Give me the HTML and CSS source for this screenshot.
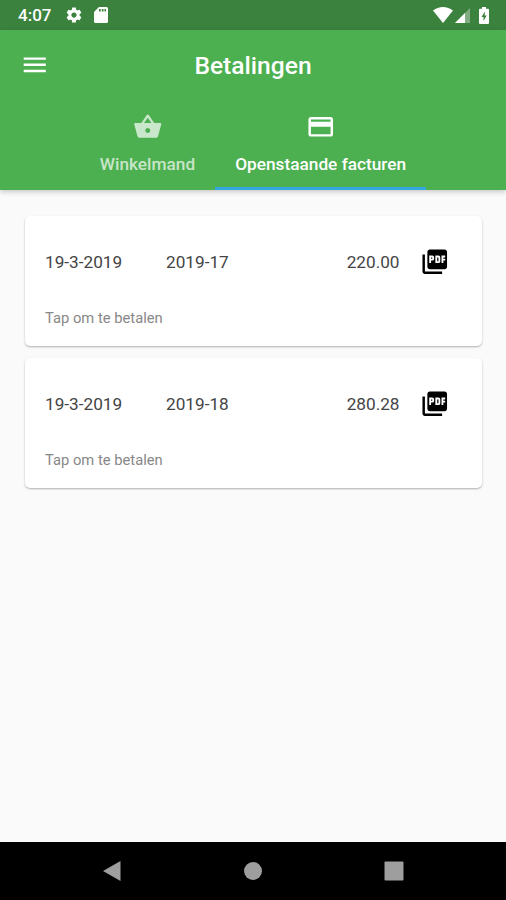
FILE: index.html
```html
<!DOCTYPE html>
<html lang="nl">
<head>
    <meta charset="UTF-8">
    <meta name="viewport" content="width=device-width, initial-scale=1.0">
    <title>Betalingen</title>
    <link rel="stylesheet" href="styles.css">
</head>
<body>
    <div class="status-bar">
        <span class="clock">4:07</span>
        <svg class="status-gear" viewBox="0 0 24 24"><path d="M19.43 12.98c.04-.32.07-.64.07-.98s-.03-.66-.07-.98l2.11-1.65c.19-.15.24-.42.12-.64l-2-3.46c-.12-.22-.39-.3-.61-.22l-2.49 1c-.52-.4-1.08-.73-1.69-.98l-.38-2.65C14.46 2.18 14.25 2 14 2h-4c-.25 0-.46.18-.49.42l-.38 2.65c-.61.25-1.17.59-1.69.98l-2.49-1c-.23-.09-.49 0-.61.22l-2 3.46c-.13.22-.07.49.12.64l2.11 1.65c-.04.32-.07.65-.07.98s.03.66.07.98l-2.11 1.65c-.19.15-.24.42-.12.64l2 3.46c.12.22.39.3.61.22l2.49-1c.52.4 1.08.73 1.69.98l.38 2.65c.03.24.24.42.49.42h4c.25 0 .46-.18.49-.42l.38-2.65c.61-.25 1.17-.59 1.69-.98l2.49 1c.23.09.49 0 .61-.22l2-3.46c.12-.22.07-.49-.12-.64l-2.11-1.65zM12 15.5c-1.93 0-3.5-1.57-3.5-3.5s1.57-3.5 3.5-3.5 3.5 1.57 3.5 3.5-1.57 3.5-3.5 3.5z"/></svg>
        <svg class="status-card" viewBox="0 0 14 16"><path d="M5 0h7.500Q14 0 14 1.500v13Q14 16 12.500 16h-11Q0 16 0 14.500V5z"/><path class="card-pins" d="M5 2h1.700v2.500H5zM7.800 2h1.700v2.500H7.800zM10.500 2h1.500v2.500h-1.500z"/></svg>
        <div class="status-right">
            <svg class="status-wifi" viewBox="0 0 20 16"><path d="M0 3.500Q4.500 0 10 0t10 3.500L10 16z"/></svg>
            <svg class="status-signal" viewBox="0 0 15 15"><path class="dim" d="M15 0v15H0z"/><path d="M10 5v10H0z"/></svg>
            <svg class="status-battery" viewBox="0 0 10 17"><path d="M3 0h4v1.700h2Q10 1.700 10 2.700V16q0 1-1 1H1q-1 0-1-1V2.700q0-1 1-1h2z"/><path class="bolt" d="M5.800 4.500 2.500 10h2v4l3.200-5.500h-2z"/></svg>
        </div>
    </div>

    <header>
        <div class="app-bar">
            <svg class="icon" viewBox="0 0 24 24"><path d="M3 18h18v-2H3v2zm0-5h18v-2H3v2zm0-7v2h18V6H3z"/></svg>
            <h1>Betalingen</h1>
        </div>
        <nav class="tabs">
            <div class="tab">
                <svg class="icon" viewBox="0 0 24 24"><path d="M17.210 9l-4.380-6.560c-.19-.28-.51-.42-.83-.42-.32 0-.64.14-.83.43L6.790 9H2c-.55 0-1 .45-1 1 0 .09.010.18.040.27l2.540 9.270c.23.84 1 1.460 1.920 1.460h13c.92 0 1.690-.62 1.930-1.460l2.540-9.270L23 10c0-.55-.45-1-1-1h-4.790zM9 9l3-4.400L15 9H9zm3 8c-1.100 0-2-.9-2-2s.9-2 2-2 2 .9 2 2-.9 2-2 2z"/></svg>
                <span>Winkelmand</span>
            </div>
            <div class="tab active">
                <svg class="icon" viewBox="0 0 24 24"><path d="M20 4H4c-1.110 0-1.990.89-1.990 2L2 18c0 1.110.89 2 2 2h16c1.110 0 2-.89 2-2V6c0-1.110-.89-2-2-2zm0 14H4v-6h16v6zm0-10H4V6h16v2z"/></svg>
                <span>Openstaande facturen</span>
            </div>
        </nav>
    </header>

    <main>
        <div class="card">
            <div class="invoice">
                <span class="date">19-3-2019</span>
                <span class="number">2019-17</span>
                <span class="amount">220.00</span>
                <svg class="icon" viewBox="0 0 24 24"><path d="M20 2H8c-1.100 0-2 .9-2 2v12c0 1.100.9 2 2 2h12c1.100 0 2-.9 2-2V4c0-1.100-.9-2-2-2zm-8.500 7.500c0 .83-.67 1.500-1.500 1.500H9v2H7.500V7H10c.83 0 1.500.67 1.500 1.500v1zm5 2c0 .83-.67 1.500-1.500 1.500h-2.500V7H15c.83 0 1.500.67 1.500 1.500v3zm4-3H19v1h1.500V11H19v2h-1.500V7h3v1.500zM9 9.500h1v-1H9v1zM4 6H2v14c0 1.100.9 2 2 2h14v-2H4V6zm10 5.500h1v-3h-1v3z"/></svg>
            </div>
            <p>Tap om te betalen</p>
        </div>
        <div class="card">
            <div class="invoice">
                <span class="date">19-3-2019</span>
                <span class="number">2019-18</span>
                <span class="amount">280.28</span>
                <svg class="icon" viewBox="0 0 24 24"><path d="M20 2H8c-1.100 0-2 .9-2 2v12c0 1.100.9 2 2 2h12c1.100 0 2-.9 2-2V4c0-1.100-.9-2-2-2zm-8.500 7.500c0 .83-.67 1.500-1.500 1.500H9v2H7.500V7H10c.83 0 1.500.67 1.500 1.500v1zm5 2c0 .83-.67 1.500-1.500 1.500h-2.500V7H15c.83 0 1.500.67 1.500 1.500v3zm4-3H19v1h1.500V11H19v2h-1.500V7h3v1.500zM9 9.500h1v-1H9v1zM4 6H2v14c0 1.100.9 2 2 2h14v-2H4V6zm10 5.500h1v-3h-1v3z"/></svg>
            </div>
            <p>Tap om te betalen</p>
        </div>
    </main>

    <footer>
        <svg viewBox="0 0 20 22"><path d="M18.500 1v20L1 11z"/></svg>
        <svg viewBox="0 0 20 22"><circle cx="10" cy="11" r="9"/></svg>
        <svg viewBox="0 0 20 22"><rect x=".5" y="1.500" width="19" height="19" rx="1"/></svg>
    </footer>
</body>
</html>
```

FILE: styles.css
```css
:root {
    --primary: #4caf50;
    --primary-dark: #3b823e;
    --accent: #35a7df;
    --background: #fafafa;
}

* {
    box-sizing: border-box;
    margin: 0;
    padding: 0;
}

body {
    display: flex;
    flex-direction: column;
    height: 100vh;
    overflow: hidden;
    background-color: var(--background);
    font-family: Roboto, "Liberation Sans", sans-serif;
}

svg {
    display: block;
    flex: none;
    fill: currentColor;
}

.icon {
    width: 29.5px;
    height: 29.5px;
}

/* Status bar */
.status-bar {
    display: flex;
    align-items: center;
    height: 30px;
    padding: 0 17px 0 18px;
    background-color: var(--primary-dark);
    color: white;
}

.clock {
    width: 47px;
    font-size: 17px;
    font-weight: 500;
}

.status-gear {
    width: 18px;
    height: 18px;
}

.status-card {
    width: 14px;
    height: 16px;
    margin-left: 11px;
}

.card-pins,
.bolt {
    fill: var(--primary-dark);
}

.status-right {
    display: flex;
    align-items: center;
    margin-left: auto;
}

.status-wifi {
    width: 20px;
    height: 16px;
}

.status-signal {
    width: 15px;
    height: 15px;
    margin-left: 2px;
}

.status-battery {
    width: 10px;
    height: 17px;
    margin-left: 9px;
}

.dim {
    opacity: 0.35;
}

/* App bar and tabs */
header {
    height: 160px;
    background-color: var(--primary);
    color: white;
    box-shadow: 0 2px 5px rgba(0, 0, 0, 0.2);
}

.app-bar {
    display: grid;
    grid-template-columns: 30px 1fr 30px;
    align-items: center;
    height: 70px;
    padding: 0 20px;
}

.app-bar h1 {
    font-size: 24.6px;
    font-weight: 500;
    text-align: center;
}

.tabs {
    display: flex;
    justify-content: center;
    height: 90px;
}

.tab {
    display: flex;
    flex-direction: column;
    align-items: center;
    padding: 12px 20px 0;
    border-bottom: 3px solid transparent;
    font-size: 17.25px;
    font-weight: 500;
    line-height: 20px;
    white-space: nowrap;
    color: rgba(255, 255, 255, 0.7);
}

.tab span {
    margin-top: 12px;
}

.tab.active {
    color: white;
    border-bottom-color: var(--accent);
}

/* Invoices */
main {
    flex: 1;
    padding: 26px 24px 0 25px;
}

.card {
    height: 130px;
    margin-bottom: 12px;
    padding: 31px 33px 0 20px;
    background-color: white;
    border-radius: 5px;
    box-shadow: 0 1px 2px rgba(0, 0, 0, 0.3);
}

.invoice {
    display: flex;
    align-items: center;
    font-size: 17.2px;
    color: #444;
}

.date {
    width: 121px;
}

.amount {
    margin-left: auto;
    margin-right: 20px;
}

.invoice .icon {
    color: black;
}

.card p {
    margin-top: 31px;
    font-size: 14.76px;
    line-height: 20px;
    color: #888;
}

/* Navigation bar */
footer {
    display: flex;
    justify-content: space-between;
    align-items: center;
    height: 58px;
    padding: 0 102px;
    background-color: black;
    color: #9e9e9e;
}

footer svg {
    width: 20px;
    height: 22px;
}
```
